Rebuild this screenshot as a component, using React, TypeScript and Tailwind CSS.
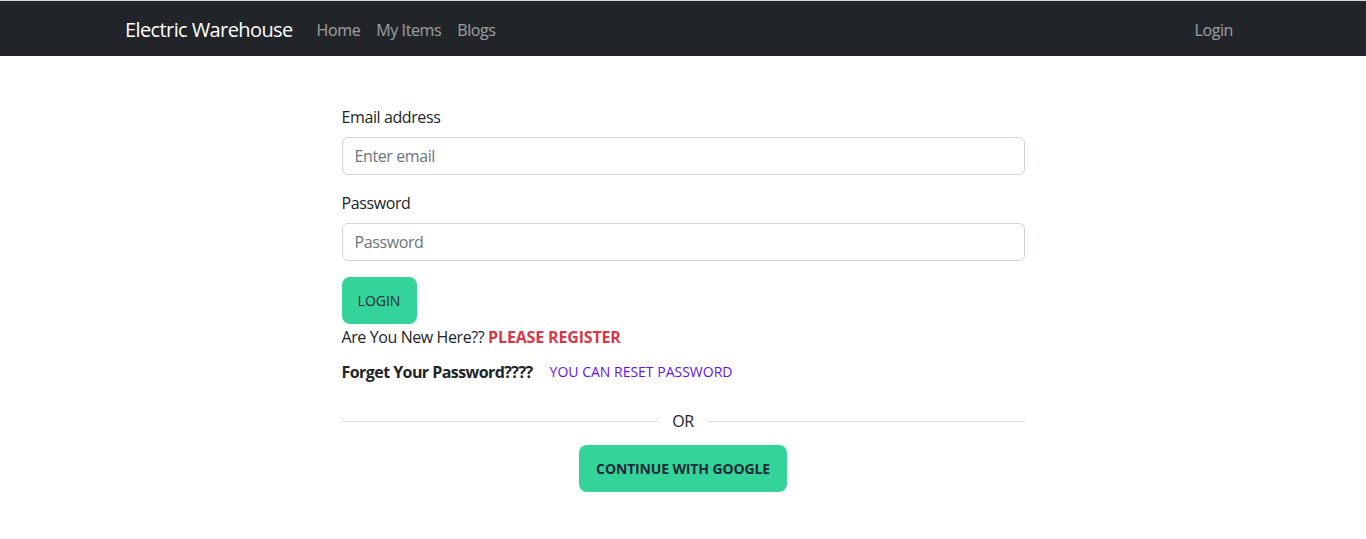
const navLinks = ["Home", "My Items", "Blogs"];

function Navbar() {
  return (
    <nav className="border-t border-[#d9d9d9] bg-[#212529]">
      <div className="mx-auto flex h-[55px] max-w-[1140px] items-center px-3 pt-[2px]">
        <a href="#" className="mr-4 text-[20px] tracking-[-0.03em] text-white">
          Electric Warehouse
        </a>
        <ul className="flex">
          {navLinks.map((l) => (
            <li key={l}>
              <a href="#" className="px-2 text-[16px] text-white/55">
                {l}
              </a>
            </li>
          ))}
        </ul>
        <a href="#" className="ml-auto px-2 text-[16px] text-white/55">
          Login
        </a>
      </div>
    </nav>
  );
}

function LoginForm() {
  return (
    <div className="mx-auto mt-[49px] w-1/2 text-[16px] text-[#212529]">
      <form>
        <div className="mb-4">
          <label className="mb-2 block leading-6">Email address</label>
          <input
            type="email"
            placeholder="Enter email"
            className="block h-[38px] w-full rounded-[6px] border border-[#ced4da] px-3 text-[16px] placeholder:text-[#6c757d] focus:outline-none"
          />
        </div>
        <div className="mb-4">
          <label className="mb-2 block leading-6">Password</label>
          <input
            type="password"
            placeholder="Password"
            className="block h-[38px] w-full rounded-[6px] border border-[#ced4da] px-3 text-[16px] placeholder:text-[#6c757d] focus:outline-none"
          />
        </div>
        <button
          type="button"
          className="h-[47px] w-[75px] rounded-lg bg-[#34d399] text-[14px] tracking-normal text-[#1f2937]"
        >
          LOGIN
        </button>
      </form>
      <p className="mt-[1px] leading-6">
        Are You New Here??{" "}
        <a href="#" className="font-bold tracking-[-0.01em] text-[#dc3545]">
          PLEASE REGISTER
        </a>
      </p>
      <div className="mt-[11px] flex items-center leading-6">
        <span className="font-bold tracking-[-0.035em]">Forget Your Password????</span>
        <a href="#" className="ml-[17px] text-[14px] tracking-normal text-[#6610f2]">
          YOU CAN RESET PASSWORD
        </a>
      </div>
      <div className="mt-[25px] flex items-center">
        <div className="h-px flex-1 bg-[#dedede]" />
        <span className="px-[14px] leading-6">OR</span>
        <div className="h-px flex-1 bg-[#dedede]" />
      </div>
      <div className="mt-[12px] flex justify-center">
        <button
          type="button"
          className="h-[47px] rounded-lg bg-[#34d399] px-[17px] text-[14px] font-bold tracking-[-0.01em] text-[#1f2937]"
        >
          CONTINUE WITH GOOGLE
        </button>
      </div>
    </div>
  );
}

export default function App() {
  return (
    <div className="min-h-[539px] bg-white font-['Open_Sans',sans-serif] tracking-[-0.025em]">
      <Navbar />
      <LoginForm />
    </div>
  );
}
